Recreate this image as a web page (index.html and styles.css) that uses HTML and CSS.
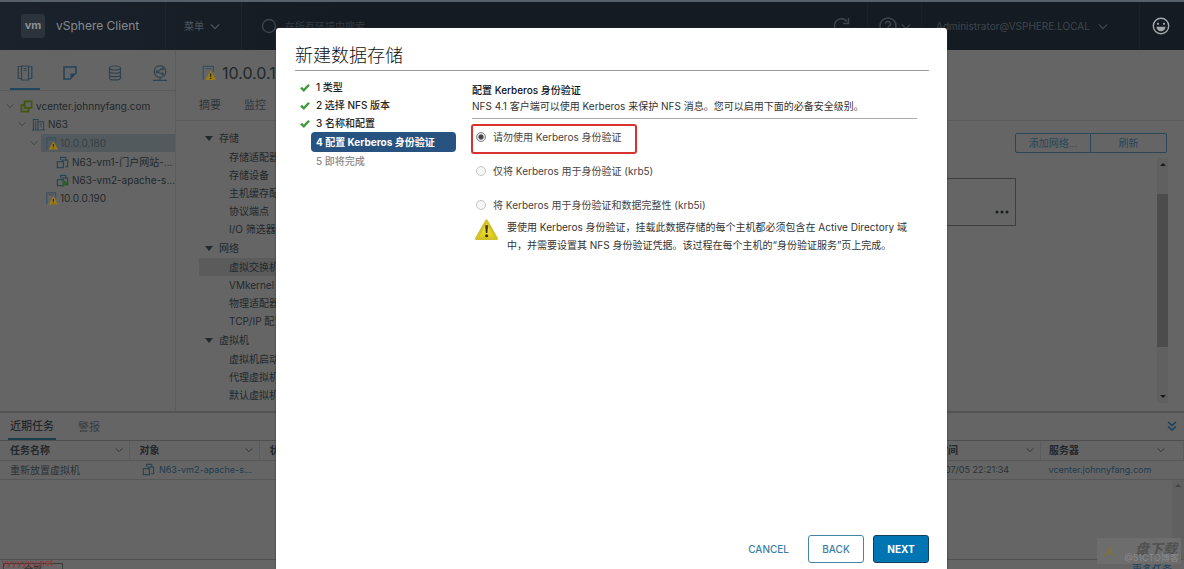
FILE: index.html
```html
<!DOCTYPE html>
<html lang="zh-CN">
<head>
<meta charset="utf-8">
<title>vSphere Client</title>
<link rel="stylesheet" href="styles.css">
</head>
<body>
<svg class="defs" aria-hidden="true">
  <symbol id="chev" viewBox="0 0 12 8"><path d="M1 1.500l5 5 5-5" fill="none" stroke="currentColor" stroke-width="1.500"/></symbol>
  <symbol id="host" viewBox="0 0 14 14"><path d="M2 13.300V.8h9.500V6" fill="none" stroke="#35505f" stroke-width="1.200"/><path d="M4 3h5.500" stroke="#35505f"/><path d="M9 4.500l5 9H4z" fill="#9b7c12"/><path d="M9 7.500v3M9 11.500v1" stroke="#2b2508" stroke-width="1.200"/></symbol>
  <symbol id="vm" viewBox="0 0 14 14"><g fill="none" stroke="#2c4450" stroke-width="1.300"><path d="M5 4V1.500h5.500V4M6 4.500h6.500v7H10"/><path d="M1.500 6H8v6.500H1.500z"/></g></symbol>
  <symbol id="check" viewBox="0 0 10 9"><path d="M1 4.600l2.800 2.700L9 1.800" fill="none" stroke="#3f9b3b" stroke-width="2.400"/></symbol>
</svg>
<div class="app">
  <header class="topbar">
    <div class="brand"><span class="logo">vm</span><span class="product">vSphere Client</span></div>
    <button class="menu">菜单 <svg class="chev"><use href="#chev"/></svg></button>
    <label class="search"><svg viewBox="0 0 16 16"><circle cx="8" cy="8" r="6.500" fill="none" stroke="currentColor" stroke-width="1.300"/></svg><input type="search" placeholder="在所有环境中搜索" aria-label="搜索"></label>
    <button class="tool refresh" aria-label="刷新页面"><svg viewBox="0 0 18 18"><path d="M16 11a7 7 0 1 1-1-6.500M16.500 1v5.500H11" fill="none" stroke="currentColor" stroke-width="1.400"/></svg></button>
    <button class="tool help" aria-label="帮助"><svg viewBox="0 0 18 18"><g fill="none" stroke="currentColor" stroke-width="1.400"><circle cx="9" cy="9" r="8"/><path d="M6.500 7a2.500 2.500 0 1 1 3.600 2.200C9.200 9.700 9 10 9 11M9 12.500v1.500"/></g></svg><svg class="chev"><use href="#chev"/></svg></button>
    <button class="tool user">Administrator@VSPHERE.LOCAL <svg class="chev"><use href="#chev"/></svg></button>
    <button class="tool smile" aria-label="反馈"><svg viewBox="0 0 18 18"><circle cx="9" cy="9" r="7.700" fill="none" stroke="currentColor" stroke-width="1.400"/><circle cx="6" cy="6.800" r="1.100" fill="currentColor"/><circle cx="12" cy="6.800" r="1.100" fill="currentColor"/><path d="M4.500 9.800h9a4.500 4.500 0 0 1-9 0z" fill="currentColor"/></svg></button>
  </header>

  <div class="workspace">
    <aside class="sidebar">
      <nav class="views">
        <button class="view on" aria-label="主机和集群"><svg viewBox="0 0 16 16"><g fill="none" stroke="currentColor" stroke-width="1.200"><path d="M4 13.500H1.200V1.500H4M12 1.500h2.800v12H12M4.500 1h7v14h-7zM6.500 3.500h3M6.500 5.500h3"/></g></svg></button>
        <button class="view" aria-label="虚拟机和模板"><svg viewBox="0 0 16 16"><path d="M9 14H2V2h12v7" fill="none" stroke="#24435a" stroke-width="1.600"/><path d="M14.500 8.500l-6 6v-6z" fill="#24435a"/></svg></button>
        <button class="view" aria-label="存储"><svg viewBox="0 0 16 16"><g fill="none" stroke="currentColor" stroke-width="1.200"><ellipse cx="8" cy="3" rx="5.500" ry="2"/><path d="M2.500 3v10c0 2.600 11 2.600 11 0V3M2.500 6.300c0 2.600 11 2.600 11 0M2.500 9.700c0 2.600 11 2.600 11 0"/></g></svg></button>
        <button class="view" aria-label="网络"><svg viewBox="0 0 16 16"><g fill="none" stroke="currentColor" stroke-width="1.200"><circle cx="8" cy="6.500" r="5.800"/><path d="M8 12.300v2.700M1 15.300h14M5 7l5-3.500M5 7l5.500 2"/></g><g fill="currentColor"><circle cx="5" cy="7" r="1.400"/><circle cx="10.500" cy="3.800" r="1.400"/><circle cx="10.500" cy="9" r="1.400"/></g></svg></button>
      </nav>
      <ul class="tree">
        <li class="node d0"><svg class="chev"><use href="#chev"/></svg><svg class="ico" viewBox="0 0 14 14"><g fill="none" stroke="#43560d" stroke-width="1.800"><path d="M5 1.500h7.500v7H5z"/><path d="M9 8.500v4H1.500v-7H5"/></g></svg>vcenter.johnnyfang.com</li>
        <li class="node d1"><svg class="chev"><use href="#chev"/></svg><svg class="ico" viewBox="0 0 14 14"><g fill="none" stroke="#2c4450" stroke-width="1.100"><path d="M1.500 13V1.500h5V13M6.500 13V4h6v9M0 13h14M4 3v9M8.500 6.500h2M8.500 9h2"/></g></svg>N63</li>
        <li class="node d2 on"><svg class="chev"><use href="#chev"/></svg><span class="hit"><svg class="ico"><use href="#host"/></svg>10.0.0.180</span></li>
        <li class="node d3"><svg class="ico"><use href="#vm"/></svg>N63-vm1-门户网站-...</li>
        <li class="node d3"><svg class="ico" viewBox="0 0 14 14"><use href="#vm"/><path d="M7 6l6.500 4L7 14z" fill="#27602a"/></svg>N63-vm2-apache-s...</li>
        <li class="node leaf"><svg class="ico"><use href="#host"/></svg>10.0.0.190</li>
      </ul>
    </aside>

    <main class="main">
      <h1 class="object"><svg class="big"><use href="#host"/></svg>10.0.0.180</h1>
      <nav class="tabs"><a href="#">摘要</a><a href="#">监控</a></nav>
      <div class="split">
        <div class="config">
          <div class="group">存储</div>
          <a href="#">存储适配器</a><a href="#">存储设备</a><a href="#">主机缓存配置</a><a href="#">协议端点</a><a href="#">I/O 筛选器</a>
          <div class="group">网络</div>
          <a href="#" class="on">虚拟交换机</a><a href="#">VMkernel</a><a href="#">物理适配器</a><a href="#">TCP/IP 配置</a>
          <div class="group">虚拟机</div>
          <a href="#">虚拟机启动</a><a href="#">代理虚拟机</a><a href="#">默认虚拟机</a>
        </div>
        <section class="detail">
          <div class="actions"><button>添加网络...</button><button>刷新</button></div>
          <div class="scroller">
            <div class="canvas"><div class="card"><svg viewBox="0 0 14 4"><g fill="#1a1d1f"><circle cx="2" cy="2" r="1.500"/><circle cx="7" cy="2" r="1.500"/><circle cx="12" cy="2" r="1.500"/></g></svg></div></div>
            <div class="bar"><i class="up"></i><i class="thumb"></i><i class="down"></i></div>
          </div>
        </section>
      </div>
    </main>
  </div>

  <section class="tasks">
    <div class="tasktabs"><button class="on">近期任务</button><button>警报</button><svg class="collapse" viewBox="0 0 10 10"><path d="M1 1l4 3.500L9 1M1 5.500L5 9l4-3.500" fill="none" stroke="currentColor" stroke-width="1.500"/></svg></div>
    <table class="grid">
      <colgroup><col class="c1"><col class="c2"><col><col class="c4"><col class="c5"></colgroup>
      <thead><tr>
        <th><span>任务名称<svg class="chev"><use href="#chev"/></svg></span></th>
        <th><span>对象<svg class="chev"><use href="#chev"/></svg></span></th>
        <th><span>状态</span></th>
        <th><span>完成时间<svg class="chev"><use href="#chev"/></svg></span></th>
        <th><span>服务器<svg class="chev"><use href="#chev"/></svg></span></th>
      </tr></thead>
      <tbody><tr>
        <td>重新放置虚拟机</td>
        <td><a href="#"><svg class="ico"><use href="#vm"/></svg>N63-vm2-apache-s...</a></td>
        <td></td>
        <td>2023/07/05 22:21:34</td>
        <td><a href="#">vcenter.johnnyfang.com</a></td>
      </tr></tbody>
    </table>
    <div class="taskbody"><div class="taskbar"><i class="up"></i></div></div>
    <div class="taskfoot"><button class="all">全部</button><button class="more">更多任务</button></div>
  </section>

  <div class="stamp">yyyyyyy.net</div>
  <div class="watermark"><svg viewBox="0 0 16 14"><path d="M1 13L10 1l1 6 4 6-6-3z" fill="#77714f"/></svg><b>盘下载</b><span>@51CTO博客</span></div>

  <div class="dialog" role="dialog" aria-labelledby="dlg">
    <h2 id="dlg">新建数据存储</h2>
    <div class="wizard">
      <ol class="steps">
        <li><svg><use href="#check"/></svg><span>1 类型</span></li>
        <li><svg><use href="#check"/></svg><span>2 选择 NFS 版本</span></li>
        <li><svg><use href="#check"/></svg><span>3 名称和配置</span></li>
        <li class="now"><span>4 配置 Kerberos 身份验证</span></li>
        <li class="next"><span>5 即将完成</span></li>
      </ol>
      <form class="page">
        <h3>配置 Kerberos 身份验证</h3>
        <p class="intro">NFS 4.1 客户端可以使用 Kerberos 来保护 NFS 消息。您可以启用下面的必备安全级别。</p>
        <label class="opt marked"><input type="radio" name="krb" checked>请勿使用 Kerberos 身份验证</label>
        <label class="opt"><input type="radio" name="krb">仅将 Kerberos 用于身份验证 (krb5)</label>
        <label class="opt"><input type="radio" name="krb">将 Kerberos 用于身份验证和数据完整性 (krb5i)</label>
        <div class="warn">
          <svg viewBox="0 0 26 24"><defs><linearGradient id="y" x2="0" y2="1"><stop stop-color="#f6ee62"/><stop offset="1" stop-color="#dccb10"/></linearGradient></defs><path d="M13 2.500L23.500 21h-21z" fill="url(#y)" stroke="#d2c22a" stroke-width="3" stroke-linejoin="round"/><path d="M11.700 7h2.800l-.6 8h-1.600z" fill="#333016"/><circle cx="13.100" cy="18" r="1.600" fill="#333016"/></svg>
          <p>要使用 Kerberos 身份验证，挂载此数据存储的每个主机都必须包含在 Active Directory 域中，并需要设置其 NFS 身份验证凭据。该过程在每个主机的“身份验证服务”页上完成。</p>
        </div>
      </form>
    </div>
    <footer class="buttons"><button class="flat">CANCEL</button><button class="line">BACK</button><button class="solid">NEXT</button></footer>
  </div>
</div>
</body>
</html>
```
FILE: styles.css
```css
* { box-sizing: border-box; }
body { margin: 0; font: 10px/18px Inter, "Noto Sans CJK SC", sans-serif; color: #22282b; background: #656565; }
button { font: inherit; color: inherit; background: none; border: 0; padding: 0; white-space: nowrap; }
a { color: inherit; text-decoration: none; }
h1, h2, h3, p, ul, ol { margin: 0; padding: 0; font-weight: 400; list-style: none; }
svg { flex: none; display: block; }
.defs { position: absolute; width: 0; height: 0; }
.app { position: relative; height: 100vh; display: flex; flex-direction: column; overflow: hidden; }
.chev { width: 10px; height: 7px; }
.ico { width: 13px; height: 13px; }

.topbar { flex: none; height: 50px; border-top: 2px solid #56606a; display: flex; align-items: stretch; background: linear-gradient(90deg, #1a222c, #141b22 30%); color: #3f464c; }
.topbar button { display: flex; align-items: center; gap: 8px; }
.brand { width: 166px; padding-left: 21px; display: flex; align-items: center; gap: 11px; border-right: 1px solid #1d252d; }
.logo { width: 24px; height: 24px; border-radius: 3px; background: #2b333b; color: #8b8f93; font-size: 11px; font-weight: 700; line-height: 23px; text-align: center; }
.product { font-size: 12px; color: #878b8f; white-space: nowrap; }
.topbar .menu { width: 76px; padding-left: 18px; gap: 6px; color: #51575d; border-right: 1px solid #1d252d; }
.search { flex: 1; display: flex; align-items: center; gap: 8px; padding-left: 19px; }
.search svg { width: 16px; height: 16px; }
.search input { flex: 1; min-width: 0; border: 0; background: none; font: inherit; padding: 0; outline: 0; }
.search input::placeholder { color: #333a40; opacity: 1; }
.tool { border-right: 1px solid #1a2128; }
.refresh { width: 36px; }
.refresh svg, .help svg:first-child, .smile svg { width: 18px; height: 18px; }
.topbar .help { width: 54px; padding-left: 11px; gap: 4px; }
.user { width: 218px; padding-left: 14px; }
.topbar .smile { width: 44px; padding-left: 12px; border: 0; color: #a4a8ab; }

.workspace { flex: 1; min-height: 0; display: flex; }
.sidebar { width: 176px; flex: none; border-right: 1px solid #5c5c5c; }
.views { height: 41px; padding-left: 10px; display: flex; gap: 15px; border-bottom: 1px solid #5b5b5b; }
.view { width: 30px; display: flex; align-items: center; justify-content: center; padding-top: 7px; color: #2f4452; border-bottom: 2px solid transparent; }
.view svg { width: 16px; height: 16px; }
.view.on { border-color: #1f475e; }
.tree { padding-top: 6px; }
.node { height: 18px; display: flex; align-items: center; gap: 3px; white-space: nowrap; }
.node .chev { color: #3b4347; width: 8px; height: 6px; margin-right: 3px; }
.d0 { padding-left: 6px; }
.d1 { padding-left: 18px; }
.d2 { height: 20px; padding-left: 30px; gap: 0; color: #363f44; }
.hit { flex: 1; height: 18px; display: flex; align-items: center; gap: 2px; padding-left: 4px; background: #535a5e; }
.d3 { padding-left: 56px; }
.leaf { padding-left: 45px; gap: 2px; }

.main { flex: 1; min-width: 0; display: flex; flex-direction: column; }
.object { height: 46px; padding-left: 25px; display: flex; align-items: center; gap: 6px; font-size: 16px; }
.big { width: 15px; height: 16px; }
.tabs { height: 25px; padding-left: 23px; display: flex; gap: 23px; font-size: 11px; color: #30363a; border-bottom: 1px solid #5c5c5c; }
.split { flex: 1; min-height: 0; display: flex; }
.config { width: 112px; padding: 7px 0 0 23px; overflow: hidden; white-space: nowrap; }
.config a { display: block; height: 18px; padding-left: 30px; }
.config a.on { background: #5b5b5b; }
.group { height: 20px; line-height: 20px; display: flex; align-items: center; gap: 6px; padding-left: 6px; }
.group::before { content: ""; border: 4px solid transparent; border-top: 5px solid #22282b; border-bottom: 0; }
.detail { flex: 1; padding: 12px 16px 8px 12px; display: flex; flex-direction: column; }
.actions { display: flex; justify-content: flex-end; padding-right: 1px; color: #28465a; }
.actions button { width: 76px; height: 20px; border: 1px solid #2b4656; }
.actions button:first-child { border-radius: 2px 0 0 2px; }
.actions button + button { border-left: 0; border-radius: 0 2px 2px 0; }
.scroller { flex: 1; margin-top: 5px; display: flex; }
.canvas { flex: 1; padding: 20px 141px 0 0; }
.card { height: 48px; border: 1px solid #3e3e3e; display: flex; justify-content: flex-end; padding: 31px 6px 0 0; }
.card svg { width: 14px; height: 4px; }
.bar { width: 11px; background: #606060; display: flex; flex-direction: column; align-items: center; justify-content: space-between; padding: 5px 0; }
.thumb { width: 11px; height: 153px; margin-bottom: 20px; background: #4c4c4c; }
.up { border: 3px solid transparent; border-top: 0; border-bottom: 3px solid #1b1b1b; }
.down { border: 3px solid transparent; border-bottom: 0; border-top: 3px solid #1b1b1b; }

.tasks { flex: none; height: 158px; border-top: 2px solid #535353; display: flex; flex-direction: column; }
.tasktabs { height: 28px; padding: 0 7px 0 8px; display: flex; gap: 20px; font-size: 11px; color: #383d40; border-bottom: 1px solid #4e4e4e; }
.tasktabs button { padding: 0 2px; }
.tasktabs .on { color: #14191b; border-bottom: 2px solid #153d4e; }
.collapse { width: 10px; height: 10px; margin: 8px 0 0 auto; color: #173f5c; }
.grid { width: 100%; table-layout: fixed; border-collapse: collapse; line-height: 18px; }
.c1 { width: 129px; } .c2 { width: 130px; } .c4 { width: 133px; } .c5 { width: 143px; }
.grid th, .grid td { height: 19px; padding: 0 10px; text-align: left; white-space: nowrap; border-bottom: 1px solid #575757; }
.grid th { border-right: 1px solid #5c5c5c; font-weight: 600; }
.grid th span { display: flex; align-items: center; justify-content: space-between; }
.grid th .chev { width: 8px; height: 6px; margin-right: -4px; color: #363636; }
.grid th:last-child .chev { margin-right: 8px; }
.grid td { color: #2c3235; }
.grid td a { display: flex; align-items: center; gap: 4px; color: #1e3c50; font-size: 9px; }
.grid td:nth-child(2) { padding-left: 13px; }
.grid td:nth-child(4) { font-size: 9px; padding-left: 12px; }
.grid th:nth-child(5), .grid td:nth-child(5) { padding-left: 8px; }
.taskbody { flex: 1; display: flex; justify-content: flex-end; }
.taskbar { width: 12px; background: #606060; padding: 4px 3px; }
.taskbar .up { display: block; border-bottom-color: #444; }
.taskfoot { height: 10px; border-top: 1px solid #525252; padding: 3px 12px 0 3px; display: flex; justify-content: space-between; align-items: flex-start; overflow: hidden; }
.all { width: 60px; border: 1px solid #3b3b3b; font-size: 9px; line-height: 12px; }
.more { color: #183f5c; line-height: 12px; }

.stamp { position: absolute; left: 2px; bottom: 0; color: #9c3035; font-size: 9px; line-height: 12px; }
.watermark { position: absolute; right: 3px; bottom: 5px; width: 84px; height: 26px; padding: 2px 4px; background: #6d6d6d; display: flex; justify-content: space-between; color: #505050; overflow: hidden; }
.watermark svg { width: 16px; height: 14px; margin-top: 4px; }
.watermark b { font-size: 14px; font-style: italic; line-height: 18px; }
.watermark span { position: absolute; right: 2px; bottom: 0; color: #8a8a8a; font-size: 9px; line-height: 12px; }

.dialog { position: absolute; left: 276px; right: 237px; top: 28px; bottom: 0; padding: 15px 18px 6px 19px; display: flex; flex-direction: column; background: #fff; border-radius: 3px 3px 0 0; box-shadow: 0 0 2px #333; color: #333; }
.dialog h2 { height: 28px; font-size: 18px; line-height: 26px; font-weight: 300; color: #111; border-bottom: 1px solid #999; }
.wizard { flex: 1; display: flex; gap: 16px; padding: 7px 12px 0 5px; }
.steps { width: 156px; flex: none; font-weight: 500; color: #222; }
.steps li { height: 18px; display: flex; align-items: center; gap: 6px; }
.steps svg { width: 10px; height: 9px; }
.steps .now { height: 20px; margin-left: 11px; padding-left: 5px; background: #285380; color: #fff; font-weight: 700; border-radius: 4px; }
.steps .next { padding-left: 16px; color: #8b8b8b; }
.page { flex: 1; padding-top: 3px; }
.page h3 { height: 17px; font-size: 10px; font-weight: 500; color: #111; }
.intro { height: 21px; line-height: 16px; border-bottom: 1px solid #aaa; }
.opt { display: flex; align-items: center; gap: 7px; height: 34px; padding-left: 4px; color: #444; }
.opt input { appearance: none; width: 10px; height: 10px; margin: 0; border: 1px solid #c4c4c4; border-radius: 50%; background: #f7f7f7; }
.opt input:checked { border-color: #888; background: radial-gradient(#444 0 2px, #ddd 3px); }
.marked { width: 166px; height: 30px; margin: 5px 0 0 -1px; padding: 0 0 4px 3px; border: 2px solid #d7322d; border-radius: 3px; white-space: nowrap; }
.warn { display: flex; gap: 8px; color: #333; margin: -4px -2px 0 0; padding-left: 2px; }
.warn svg { width: 25px; height: 24px; }
.buttons { display: flex; justify-content: flex-end; gap: 9px; font-weight: 500; }
.buttons button { height: 28px; border-radius: 3px; }
.buttons .flat { margin-right: 10px; color: #3a7fa5; }
.buttons .line { width: 56px; color: #3a7fa5; border: 1px solid #4586a8; }
.buttons .solid { width: 56px; color: #fff; background: #0075b3; border: 1px solid #123e58; font-weight: 700; }
```
